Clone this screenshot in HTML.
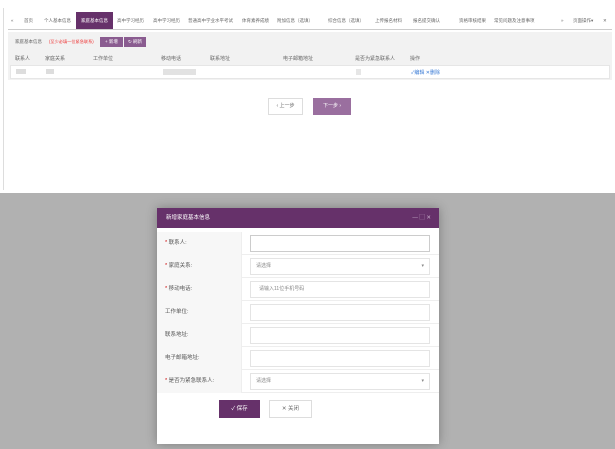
<!DOCTYPE html>
<html><head><meta charset="utf-8"><style>
*{margin:0;padding:0;box-sizing:border-box}
body{width:615px;height:449px;position:relative;overflow:hidden;background:#fff;font-family:"Liberation Sans","Noto Sans CJK SC",sans-serif;font-size:5px;color:#555}
.abs{position:absolute}
.tab{position:absolute;top:12px;height:17px;line-height:17px;font-size:4.5px;color:#666;white-space:nowrap}
.cell{position:absolute;font-size:5px;color:#666;white-space:nowrap}
.ov{position:absolute;left:0;top:193px;width:615px;height:256px;background:#b1b1b1}
.dlg{position:absolute;left:157px;top:208px;width:282px;height:236px;background:#fff;box-shadow:0 0 10px rgba(0,0,0,.3)}
.hd{height:20px;background:#66316a;color:#fff;font-size:5.5px;line-height:20px;padding-left:9px}
.row{position:absolute;left:0;width:282px;height:23px;border-bottom:1px solid #eee}
.lab{position:absolute;left:0;top:0;width:85px;height:23px;background:#f7f7f7;border-right:1px solid #eee;font-size:5.5px;line-height:23px;padding-left:8px;color:#555}
.lab b{color:#c00;font-weight:normal}
.inp{position:absolute;left:93px;top:3px;width:180px;height:17px;border:1px solid #e4e4e4;font-size:5px;line-height:15px;padding-left:5px;color:#888}
.btn{position:absolute;font-size:5.5px;text-align:center}
</style></head><body>
<div class="abs" style="left:3px;top:8px;width:1px;height:182px;background:#ddd"></div>
<div class="abs" style="left:8px;top:29px;width:604px;height:1px;background:#ccc"></div>
<div class="tab" style="left:11px">«</div>
<div class="tab" style="left:24px">首页</div>
<div class="tab" style="left:44px">个人基本信息</div>
<div class="tab" style="left:76px;width:37px;background:#66316a;color:#fff;text-align:center">家庭基本信息</div>
<div class="tab" style="left:117px">高中学习经历</div>
<div class="tab" style="left:153px">高中学习经历</div>
<div class="tab" style="left:188px">普通高中学业水平考试</div>
<div class="tab" style="left:242px">体育素养成绩</div>
<div class="tab" style="left:277px">附加信息（选填）</div>
<div class="tab" style="left:328px">综合信息（选填）</div>
<div class="tab" style="left:375px">上传报名材料</div>
<div class="tab" style="left:413px">报名提交确认</div>
<div class="tab" style="left:459px">资格审核结果</div>
<div class="tab" style="left:494px">常见问题及注意事项</div>
<div class="tab" style="left:561px">»</div>
<div class="tab" style="left:573px">页面操作▾</div>
<div class="tab" style="left:603px">✕</div>

<div class="abs" style="left:8px;top:32px;width:604px;height:48px;background:#f2f2f2"></div>
<div class="cell" style="left:15px;top:39px;font-size:4.5px">家庭基本信息</div>
<div class="cell" style="left:49px;top:39px;color:#e33;font-size:4.2px">(至少必填一位紧急联系)</div>
<div class="abs" style="left:100px;top:37px;width:23px;height:10px;background:#8a5c90;color:#fff;font-size:4.5px;line-height:10px;text-align:center">+ 新增</div>
<div class="abs" style="left:124px;top:37px;width:22px;height:10px;background:#8a5c90;color:#fff;font-size:4.5px;line-height:10px;text-align:center">↻ 刷新</div>
<div class="abs" style="left:10px;top:65px;width:600px;height:14px;background:#fff;border:1px solid #e6e6e6"></div>
<div class="cell" style="left:15px;top:55px">联系人</div>
<div class="cell" style="left:45px;top:55px">家庭关系</div>
<div class="cell" style="left:93px;top:55px">工作单位</div>
<div class="cell" style="left:161px;top:55px">移动电话</div>
<div class="cell" style="left:210px;top:55px">联系地址</div>
<div class="cell" style="left:283px;top:55px">电子邮箱地址</div>
<div class="cell" style="left:355px;top:55px">是否为紧急联系人</div>
<div class="cell" style="left:410px;top:55px">操作</div>
<div class="abs" style="left:16px;top:69px;width:10px;height:5px;background:#ddd"></div>
<div class="abs" style="left:46px;top:69px;width:8px;height:5px;background:#ddd"></div>
<div class="abs" style="left:163px;top:69px;width:33px;height:6px;background:#e2e2e2"></div>
<div class="abs" style="left:356px;top:69px;width:5px;height:6px;background:#e6e6e6"></div>
<div class="cell" style="left:411px;top:69px;color:#3a7bd5">✓编辑 ✕删除</div>
<div class="abs" style="left:268px;top:98px;width:35px;height:17px;border:1px solid #ddd;font-size:5px;line-height:15px;text-align:center;color:#666">‹ 上一步</div>
<div class="abs" style="left:313px;top:98px;width:38px;height:17px;background:#9a6f9f;color:#fff;font-size:5px;line-height:17px;text-align:center">下一步 ›</div>

<div class="ov"></div>
<div class="dlg">
<div class="hd">新增家庭基本信息<span style="position:absolute;right:8px;color:#c9b0cc">— ▢ ✕</span></div>
<div class="row" style="top:24px"><div class="lab"><b>* </b>联系人:</div><div class="inp" style="border-color:#ccc"></div></div>
<div class="row" style="top:47px"><div class="lab"><b>* </b>家庭关系:</div><div class="inp">请选择<span style="position:absolute;right:5px">▾</span></div></div>
<div class="row" style="top:70px"><div class="lab"><b>* </b>移动电话:</div><div class="inp" style="padding-left:8px">请输入11位手机号码</div></div>
<div class="row" style="top:93px"><div class="lab">工作单位:</div><div class="inp"></div></div>
<div class="row" style="top:116px"><div class="lab">联系地址:</div><div class="inp"></div></div>
<div class="row" style="top:139px"><div class="lab">电子邮箱地址:</div><div class="inp"></div></div>
<div class="row" style="top:162px"><div class="lab"><b>* </b>是否为紧急联系人:</div><div class="inp">请选择<span style="position:absolute;right:5px">▾</span></div></div>
<div class="btn" style="left:62px;top:192px;width:41px;height:18px;line-height:18px;background:#66316a;color:#fff">✓ 保存</div>
<div class="btn" style="left:112px;top:192px;width:43px;height:18px;line-height:16px;border:1px solid #ddd;color:#666">✕ 关闭</div>
</div>
</body></html>
